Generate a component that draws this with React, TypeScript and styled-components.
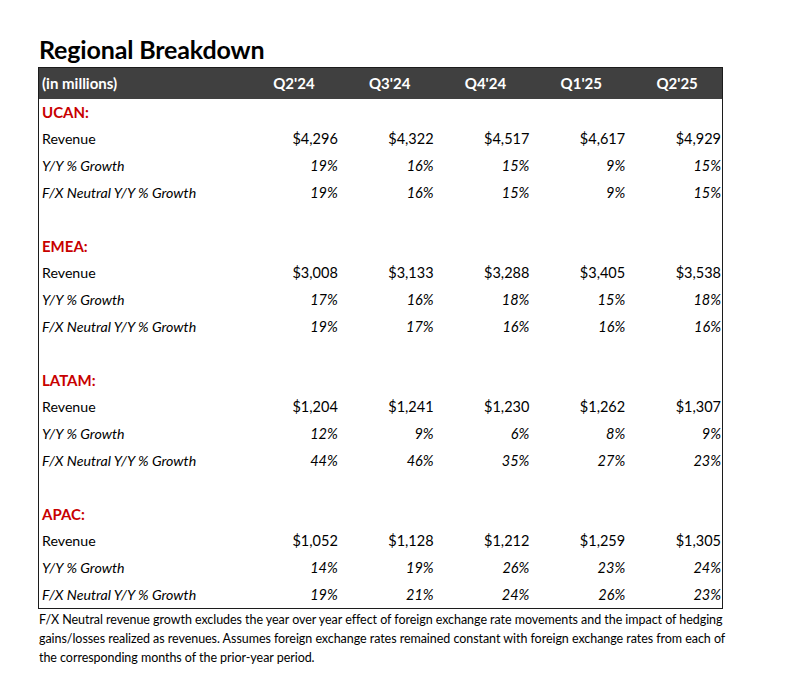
import React from 'react';
import styled, { createGlobalStyle } from 'styled-components';

const Global = createGlobalStyle`
  html, body { margin: 0; padding: 0; background: #ffffff; }
  body { font-family: Lato, "Open Sans", "Liberation Sans", sans-serif; color: #000; }
`;

const Page = styled.div`
  width: 805px;
  height: 687px;
  box-sizing: border-box;
  padding: 32px 0 0 38px;
`;

const Title = styled.h1`
  margin: 0 0 0 1px;
  height: 35px;
  font-size: 25px;
  line-height: 35px;
  font-weight: 700;
  letter-spacing: -0.15px;
`;

const Table = styled.div`
  width: 685px;
  box-sizing: border-box;
  border: 1.5px solid #1c1c1c;
  display: grid;
  grid-template-columns: 204px repeat(5, 1fr);
  grid-auto-rows: 26.8px;
  grid-template-rows: 30.5px;
`;

const HeadCell = styled.div<{ $first?: boolean }>`
  background: #404040;
  color: #fff;
  font-weight: 700;
  font-size: 15px;
  display: flex;
  align-items: center;
  justify-content: ${p => (p.$first ? 'flex-start' : 'center')};
  padding: ${p => (p.$first ? '0 0 0 3px' : '0 0 0 6px')};
`;

const Label = styled.div<{ $italic?: boolean; $region?: boolean }>`
  display: flex;
  align-items: center;
  padding-left: 3px;
  font-size: ${p => (p.$region ? '15px' : '14.2px')};
  font-style: ${p => (p.$italic ? 'italic' : 'normal')};
  font-weight: ${p => (p.$region ? 700 : 400)};
  color: ${p => (p.$region ? '#c80000' : '#000')};
  grid-column: ${p => (p.$region ? '1 / -1' : 'auto')};
  white-space: nowrap;
`;

const Value = styled.div<{ $italic?: boolean }>`
  display: flex;
  align-items: center;
  justify-content: flex-end;
  padding-right: 1px;
  font-size: 14.5px;
  font-style: ${p => (p.$italic ? 'italic' : 'normal')};
`;

const Spacer = styled.div`
  grid-column: 1 / -1;
`;

const Note = styled.p`
  margin: 1px 0 0 1px;
  font-size: 12.5px;
  line-height: 19px;
  letter-spacing: -0.05px;
  white-space: nowrap;
`;

type Region = {
  name: string;
  revenue: string[];
  yy: string[];
  fx: string[];
};

const quarters = ["Q2'24", "Q3'24", "Q4'24", "Q1'25", "Q2'25"];

const regions: Region[] = [
  {
    name: 'UCAN:',
    revenue: ['$4,296', '$4,322', '$4,517', '$4,617', '$4,929'],
    yy: ['19%', '16%', '15%', '9%', '15%'],
    fx: ['19%', '16%', '15%', '9%', '15%'],
  },
  {
    name: 'EMEA:',
    revenue: ['$3,008', '$3,133', '$3,288', '$3,405', '$3,538'],
    yy: ['17%', '16%', '18%', '15%', '18%'],
    fx: ['19%', '17%', '16%', '16%', '16%'],
  },
  {
    name: 'LATAM:',
    revenue: ['$1,204', '$1,241', '$1,230', '$1,262', '$1,307'],
    yy: ['12%', '9%', '6%', '8%', '9%'],
    fx: ['44%', '46%', '35%', '27%', '23%'],
  },
  {
    name: 'APAC:',
    revenue: ['$1,052', '$1,128', '$1,212', '$1,259', '$1,305'],
    yy: ['14%', '19%', '26%', '23%', '24%'],
    fx: ['19%', '21%', '24%', '26%', '23%'],
  },
];

const DataRow: React.FC<{ label: string; values: string[]; italic?: boolean }> = ({ label, values, italic }) => (
  <>
    <Label $italic={italic}>{label}</Label>
    {values.map((v, i) => (
      <Value key={i} $italic={italic}>{v}</Value>
    ))}
  </>
);

export default function App() {
  return (
    <>
      <Global />
      <Page>
        <Title>Regional Breakdown</Title>
        <Table>
          <HeadCell $first>(in millions)</HeadCell>
          {quarters.map(q => (
            <HeadCell key={q}>{q}</HeadCell>
          ))}
          {regions.map((r, idx) => (
            <React.Fragment key={r.name}>
              {idx > 0 && <Spacer />}
              <Label $region>{r.name}</Label>
              <DataRow label="Revenue" values={r.revenue} />
              <DataRow label="Y/Y % Growth" values={r.yy} italic />
              <DataRow label="F/X Neutral Y/Y % Growth" values={r.fx} italic />
            </React.Fragment>
          ))}
        </Table>
        <Note>
          F/X Neutral revenue growth excludes the year over year effect of foreign exchange rate movements and the impact of hedging
          <br />
          gains/losses realized as revenues. Assumes foreign exchange rates remained constant with foreign exchange rates from each of
          <br />
          the corresponding months of the prior-year period.
        </Note>
      </Page>
    </>
  );
}
